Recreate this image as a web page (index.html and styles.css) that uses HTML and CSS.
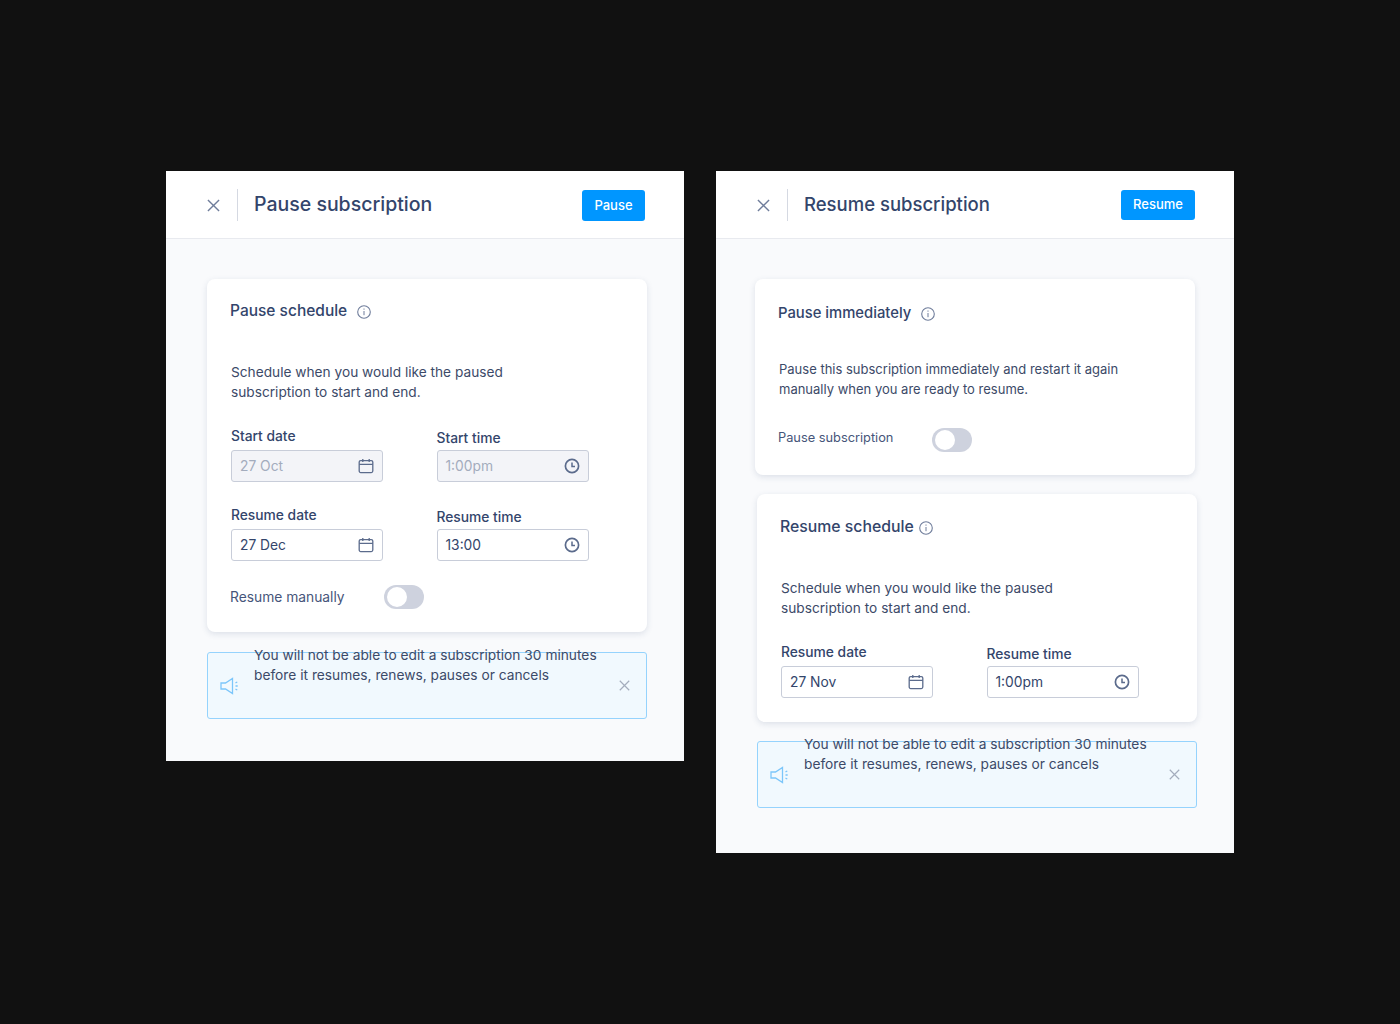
FILE: index.html
```html
<!DOCTYPE html>
<html>
<head>
<title>subscription</title>
<meta charset="utf-8">
<link rel="stylesheet" href="styles.css">
</head>
<body>
<svg width="0" height="0" class="defs">
	<symbol id="i-close" viewBox="0 0 14 14"><path d="M1 1l12 12M13 1L1 13" fill="none" stroke="currentColor" stroke-width="1.5"/></symbol>
	<symbol id="i-info" viewBox="0 0 14 14"><circle cx="7" cy="7" r="6.3" fill="none" stroke="currentColor" stroke-width="1.1"/><path d="M7 6v4.200M7 3.500v1.200" fill="none" stroke="currentColor"/></symbol>
	<symbol id="i-cal" viewBox="0 0 16 16"><rect x="1.2" y="2.6" width="13.6" height="12" rx="1.500" fill="none" stroke="currentColor" stroke-width="1.3"/><path d="M1.2 6.4h13.6M4.8 1v3M11.2 1v3" fill="none" stroke="currentColor" stroke-width="1.3"/></symbol>
	<symbol id="i-clock" viewBox="0 0 16 16"><circle cx="8" cy="8" r="6.600" fill="none" stroke="currentColor" stroke-width="1.700"/><path d="M8 4.400V8.400H11" fill="none" stroke="currentColor" stroke-width="1.500"/></symbol>
	<symbol id="i-horn" viewBox="0 0 20 18"><path d="M1 6h4.500L12.500 1.500v15L5.500 12H1zM15.500 5.800l1.800-.8M15.500 9h2.200M15.500 12.200l1.800.8" fill="none" stroke="currentColor" stroke-width="1.300"/></symbol>
</svg>

<div class="screens">

	<div class="panel panel-pause">
		<div class="head">
			<svg class="head-x"><use href="#i-close"/></svg>
			<h1>Pause subscription</h1>
			<button class="btn btn-pause">Pause</button>
		</div>
		<div class="body">
			<div class="card card-schedule">
				<h2>Pause schedule <svg class="info"><use href="#i-info"/></svg></h2>
				<p>Schedule when you would like the paused<br>subscription to start and end.</p>
				<div class="fields">
					<div class="field">
						<label>Start date</label>
						<div class="input off">27 Oct <svg class="ic"><use href="#i-cal"/></svg></div>
					</div>
					<div class="field low">
						<label>Start time</label>
						<div class="input off">1:00pm <svg class="ic"><use href="#i-clock"/></svg></div>
					</div>
					<div class="field">
						<label>Resume date</label>
						<div class="input">27 Dec <svg class="ic"><use href="#i-cal"/></svg></div>
					</div>
					<div class="field low">
						<label>Resume time</label>
						<div class="input">13:00 <svg class="ic"><use href="#i-clock"/></svg></div>
					</div>
				</div>
				<div class="toggle-row">
					<span>Resume manually</span>
					<div class="toggle"></div>
				</div>
			</div>
			<div class="notice">
				<svg class="horn"><use href="#i-horn"/></svg>
				<p>You will not be able to edit a subscription 30 minutes<br>before it resumes, renews, pauses or cancels</p>
				<svg class="notice-x"><use href="#i-close"/></svg>
			</div>
		</div>
	</div>

	<div class="panel panel-resume">
		<div class="head">
			<svg class="head-x"><use href="#i-close"/></svg>
			<h1>Resume subscription</h1>
			<button class="btn btn-resume">Resume</button>
		</div>
		<div class="body">
			<div class="card card-immediate">
				<h2>Pause immediately <svg class="info"><use href="#i-info"/></svg></h2>
				<p>Pause this subscription immediately and restart it again<br>manually when you are ready to resume.</p>
				<div class="toggle-row">
					<span>Pause subscription</span>
					<div class="toggle"></div>
				</div>
			</div>
			<div class="card card-resume">
				<h2>Resume schedule <svg class="info"><use href="#i-info"/></svg></h2>
				<p>Schedule when you would like the paused<br>subscription to start and end.</p>
				<div class="fields">
					<div class="field">
						<label>Resume date</label>
						<div class="input">27 Nov <svg class="ic"><use href="#i-cal"/></svg></div>
					</div>
					<div class="field low">
						<label>Resume time</label>
						<div class="input">1:00pm <svg class="ic"><use href="#i-clock"/></svg></div>
					</div>
				</div>
			</div>
			<div class="notice">
				<svg class="horn"><use href="#i-horn"/></svg>
				<p>You will not be able to edit a subscription 30 minutes<br>before it resumes, renews, pauses or cancels</p>
				<svg class="notice-x"><use href="#i-close"/></svg>
			</div>
		</div>
	</div>

</div>
</body>
</html>
```

FILE: styles.css
```css
* {
	box-sizing: border-box;
}

body {
	margin: 0;
	height: 1024px;
	background-color: #111111;
	font-family: "Inter", "Open Sans", sans-serif;
	color: #33456b;
	overflow: hidden;
}

.defs {
	display: block;
	height: 0;
}

.screens {
	display: flex;
	align-items: flex-start;
	gap: 32px;
	padding: 171px 0 0 166px;
}

.panel {
	width: 518px;
	background-color: #f9fafc;
}

.panel-pause {
	height: 590px;
}

.panel-resume {
	height: 682px;
}

/* header */
.head {
	height: 68px;
	display: flex;
	align-items: center;
	padding: 0 39px 0 41px;
	background-color: #fff;
	border-bottom: 1px solid #e8eaef;
}

.head-x {
	width: 13px;
	height: 13px;
	margin-top: 2px;
	color: #6f7d9b;
}

.head h1 {
	flex: 1;
	height: 32px;
	margin: 0 0 0 17px;
	padding-left: 16px;
	border-left: 1px solid #d5d9e2;
	font-size: 19.5px;
	font-weight: 500;
	line-height: 31px;
	color: #33456b;
}

.panel-resume h1 {
	font-size: 18.500px;
}

.btn {
	height: 31px;
	padding: 0;
	border: 0;
	border-radius: 3px;
	background-color: #0096ff;
	color: #fff;
	font-family: inherit;
	font-size: 13px;
	font-weight: 500;
}

.btn-pause {
	width: 63px;
	margin-top: 1px;
}

.btn-resume {
	width: 74px;
	height: 30px;
	margin: 0 0 0 -1px;
	padding-bottom: 2px;
}

/* cards */
.body {
	display: flex;
	flex-direction: column;
	padding: 40px 37px 0 41px;
}

.card {
	background-color: #fff;
	border-radius: 8px;
	box-shadow: 0 2px 6px rgba(50, 70, 110, 0.14);
	padding: 22px 23px 0;
}

.card h2 {
	display: flex;
	align-items: center;
	margin: 0;
	font-size: 15.500px;
	font-weight: 500;
	line-height: 20px;
}

.info {
	width: 14px;
	height: 14px;
	margin: 2px 0 0 10px;
	color: #6f7d9b;
}

.card p {
	margin: 41px 0 0 1px;
	font-size: 13.700px;
	line-height: 20px;
	color: #3c4a68;
}

.card-schedule {
	height: 353px;
}

.card-immediate {
	height: 196px;
	margin: 0 2px 19px -2px;
	padding-top: 24px;
}

.card-immediate h2 {
	font-size: 14.800px;
}

.card-immediate p {
	margin-top: 36px;
	font-size: 13px;
}

.card-resume {
	height: 228px;
	margin-bottom: 19px;
	padding-top: 23px;
}

.card-resume h2 {
	font-size: 15.800px;
}

.card-resume .info {
	margin-left: 5px;
}

/* date and time fields */
.fields {
	display: grid;
	grid-template-columns: 152px 152px;
	column-gap: 53.500px;
	row-gap: 24px;
	margin: 25px 0 0 1px;
}

.field label {
	display: block;
	font-size: 13.800px;
	font-weight: 500;
	line-height: 18px;
	margin-bottom: 5px;
}

.field.low {
	margin-top: 2px;
}

.field.low label {
	margin-bottom: 3px;
}

.input {
	display: flex;
	align-items: center;
	justify-content: space-between;
	height: 32px;
	padding: 0 8px 0 8px;
	background-color: #fff;
	border: 1px solid #c8cdd9;
	border-radius: 3px;
	font-size: 13.800px;
}

.input.off {
	background-color: #f3f4f8;
	color: #a3acbd;
}

.ic {
	width: 16px;
	height: 16px;
	color: #5b6b8c;
}

.toggle-row {
	display: flex;
	align-items: center;
	margin-top: 24px;
	font-size: 13.800px;
	color: #46557a;
}

.toggle-row span {
	width: 154px;
	margin-bottom: 1px;
	white-space: nowrap;
}

.card-immediate .toggle-row {
	margin-top: 29px;
	font-size: 12.800px;
}

.card-immediate .toggle-row span {
	margin-bottom: 6px;
}

.toggle {
	width: 40px;
	height: 24px;
	padding: 2px 4px;
	border-radius: 12px;
	background-color: #ced2de;
}

.toggle::before {
	content: "";
	display: block;
	width: 20px;
	height: 20px;
	margin-left: -1px;
	border-radius: 50%;
	background-color: #fff;
}

/* notice */
.notice {
	position: relative;
	height: 67px;
	margin-top: 20px;
	display: flex;
	align-items: center;
	background-color: #f1f9fe;
	border: 1px solid #95d3fd;
	border-radius: 3px;
}

.card-resume + .notice {
	margin-top: 0;
}

.horn {
	width: 20px;
	height: 18px;
	margin-left: 12px;
	color: #7cc6fa;
}

.notice p {
	position: absolute;
	top: -8px;
	left: 46px;
	margin: 0;
	font-size: 13.750px;
	line-height: 20px;
	color: #3c4a68;
}

.notice-x {
	position: absolute;
	right: 16px;
	top: 27px;
	width: 11px;
	height: 11px;
	color: #a4adbd;
}
```
